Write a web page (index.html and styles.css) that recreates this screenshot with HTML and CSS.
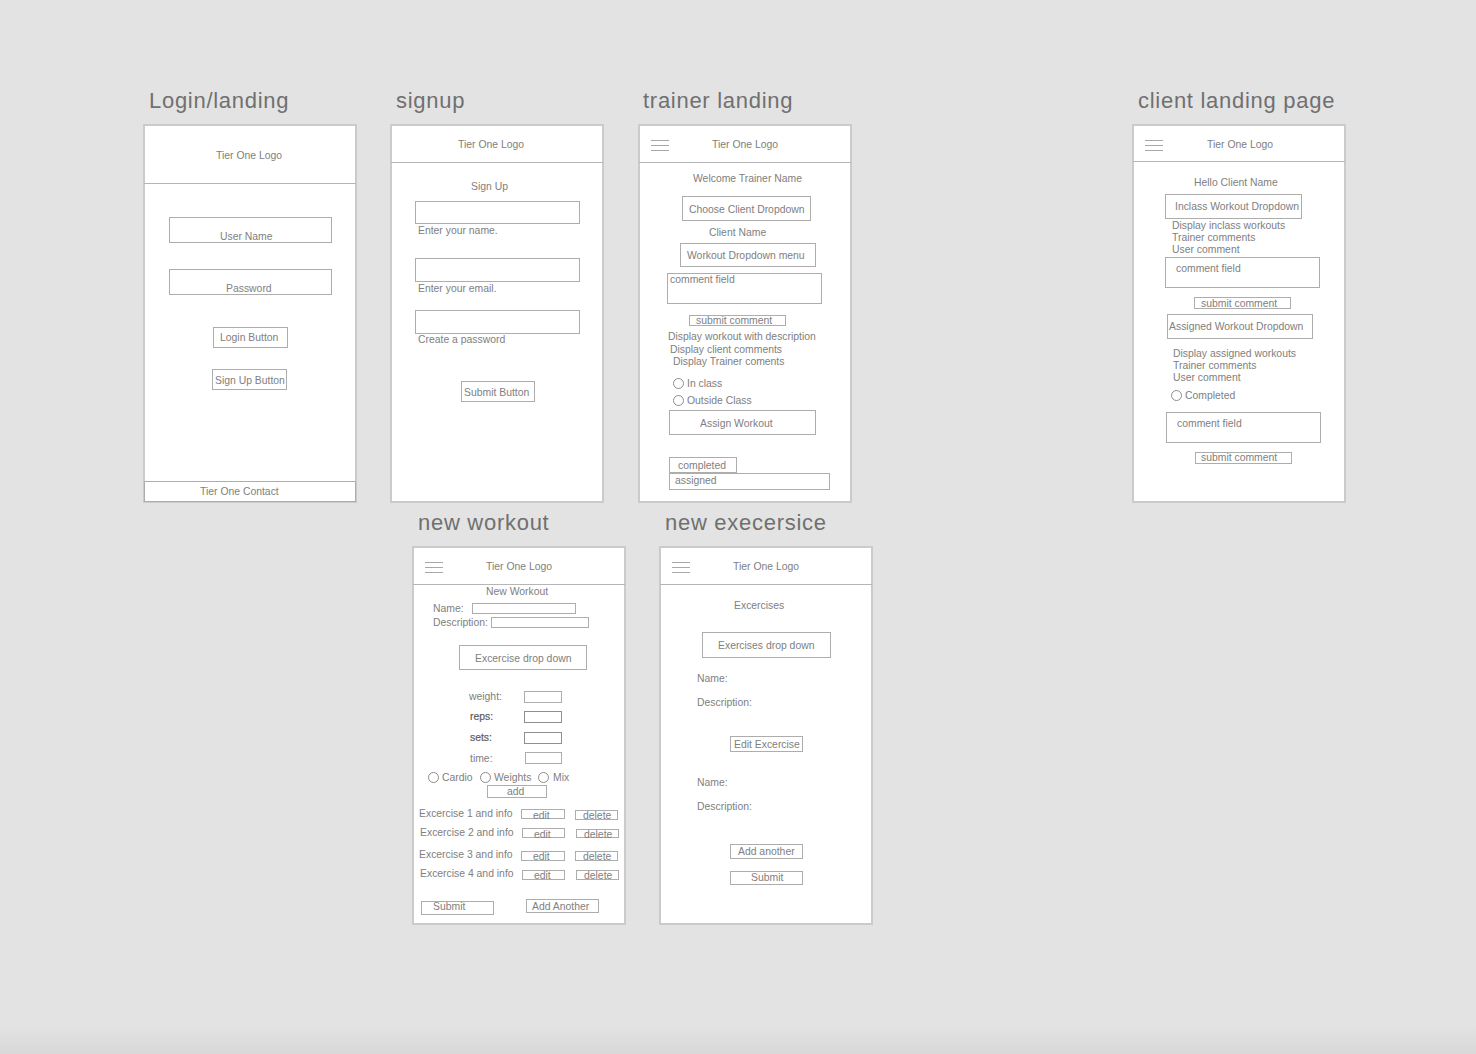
FILE: index.html
```html
<!DOCTYPE html>
<html lang="en">
<head>
  <meta charset="UTF-8">
  <title>Tier One wireframes</title>
  <link rel="stylesheet" href="styles.css">
</head>
<body>
  <div class="canvas">
    <h2 class="title title-login">Login/landing</h2>
    <h2 class="title title-signup">signup</h2>
    <h2 class="title title-trainer">trainer landing</h2>
    <h2 class="title title-client">client landing page</h2>
    <h2 class="title title-workout">new workout</h2>
    <h2 class="title title-exercise">new execersice</h2>

    <!-- login -->
    <section class="frame frame-login">
      <div class="head head-tall"><span>Tier One Logo</span></div>
      <div class="box l-user-box"></div><span class="txt l-user">User Name</span>
      <div class="box l-pass-box"></div><span class="txt l-pass">Password</span>
      <div class="box l-login-box"></div><span class="txt l-login">Login Button</span>
      <div class="box l-signup-box"></div><span class="txt l-signup">Sign Up Button</span>
      <div class="box l-foot-box"></div><span class="txt l-foot">Tier One Contact</span>
    </section>

    <!-- signup -->
    <section class="frame frame-signup">
      <div class="head head-plain"><span>Tier One Logo</span></div>
      <span class="txt s-title">Sign Up</span>
      <div class="box s-name-box"></div><span class="txt s-name">Enter your name.</span>
      <div class="box s-email-box"></div><span class="txt s-email">Enter your email.</span>
      <div class="box s-pass-box"></div><span class="txt s-pass">Create a password</span>
      <div class="box s-submit-box"></div><span class="txt s-submit">Submit Button</span>
    </section>

    <!-- trainer landing -->
    <section class="frame frame-trainer">
      <div class="head"><svg class="menu" viewBox="0 0 18 12"><path d="M0 .5h18M0 5.5h18M0 10.5h18"/></svg><span>Tier One Logo</span></div>
      <span class="txt t-welcome">Welcome Trainer Name</span>
      <div class="box t-client-box"></div><span class="txt t-client">Choose Client Dropdown</span>
      <span class="txt t-name">Client Name</span>
      <div class="box t-workout-box"></div><span class="txt t-workout">Workout Dropdown menu</span>
      <div class="box t-comment-box"></div><span class="txt t-comment">comment field</span>
      <div class="box t-submit-box"></div><span class="txt t-submit">submit comment</span>
      <span class="txt t-d1">Display workout with description</span>
      <span class="txt t-d2">Display client comments</span>
      <span class="txt t-d3">Display Trainer coments</span>
      <div class="radio t-radio1"></div><span class="txt t-inclass">In class</span>
      <div class="radio t-radio2"></div><span class="txt t-outside">Outside Class</span>
      <div class="box t-assign-box"></div><span class="txt t-assign">Assign Workout</span>
      <div class="box t-done-box"></div><span class="txt t-done">completed</span>
      <div class="box t-assigned-box"></div><span class="txt t-assigned">assigned</span>
    </section>

    <!-- client landing -->
    <section class="frame frame-client">
      <div class="head head-client"><svg class="menu" viewBox="0 0 18 12"><path d="M0 .5h18M0 5.5h18M0 10.5h18"/></svg><span>Tier One Logo</span></div>
      <span class="txt c-hello">Hello Client Name</span>
      <div class="box c-in-box"></div><span class="txt c-in">Inclass Workout Dropdown</span>
      <span class="txt c-d1">Display inclass workouts</span>
      <span class="txt c-d2">Trainer comments</span>
      <span class="txt c-d3">User comment</span>
      <div class="box c-comment-box"></div><span class="txt c-comment">comment field</span>
      <div class="box c-submit-box"></div><span class="txt c-submit">submit comment</span>
      <div class="box c-as-box"></div><span class="txt c-as">Assigned Workout Dropdown</span>
      <span class="txt c-d4">Display assigned workouts</span>
      <span class="txt c-d5">Trainer comments</span>
      <span class="txt c-d6">User comment</span>
      <div class="radio c-radio"></div><span class="txt c-done">Completed</span>
      <div class="box c-comment2-box"></div><span class="txt c-comment2">comment field</span>
      <div class="box c-submit2-box"></div><span class="txt c-submit2">submit comment</span>
    </section>

    <!-- new workout -->
    <section class="frame frame-workout">
      <div class="head"><svg class="menu" viewBox="0 0 18 12"><path d="M0 .5h18M0 5.5h18M0 10.5h18"/></svg><span>Tier One Logo</span></div>
      <span class="txt w-title">New Workout</span>
      <span class="txt w-name">Name:</span><div class="box w-name-box"></div>
      <span class="txt w-desc">Description:</span><div class="box w-desc-box"></div>
      <div class="box w-ex-box"></div><span class="txt w-ex">Excercise drop down</span>
      <span class="txt w-weight">weight:</span><div class="box w-weight-box"></div>
      <span class="txt bold w-reps">reps:</span><div class="box dark w-reps-box"></div>
      <span class="txt bold w-sets">sets:</span><div class="box dark w-sets-box"></div>
      <span class="txt w-time">time:</span><div class="box w-time-box"></div>
      <div class="radio w-radio1"></div><span class="txt w-cardio">Cardio</span>
      <div class="radio w-radio2"></div><span class="txt w-weights">Weights</span>
      <div class="radio w-radio3"></div><span class="txt w-mix">Mix</span>
      <div class="box w-add-box"></div><span class="txt w-add">add</span>

      <span class="txt w-r1">Excercise 1 and info</span>
      <div class="box w-r1-edit-box"></div><span class="txt w-r1-edit">edit</span>
      <div class="box w-r1-del-box"></div><span class="txt w-r1-del">delete</span>

      <span class="txt w-r2">Excercise 2 and info</span>
      <div class="box w-r2-edit-box"></div><span class="txt w-r2-edit">edit</span>
      <div class="box w-r2-del-box"></div><span class="txt w-r2-del">delete</span>

      <span class="txt w-r3">Excercise 3 and info</span>
      <div class="box w-r3-edit-box"></div><span class="txt w-r3-edit">edit</span>
      <div class="box w-r3-del-box"></div><span class="txt w-r3-del">delete</span>

      <span class="txt w-r4">Excercise 4 and info</span>
      <div class="box w-r4-edit-box"></div><span class="txt w-r4-edit">edit</span>
      <div class="box w-r4-del-box"></div><span class="txt w-r4-del">delete</span>

      <div class="box w-submit-box"></div><span class="txt w-submit">Submit</span>
      <div class="box w-another-box"></div><span class="txt w-another">Add Another</span>
    </section>

    <!-- new exercise -->
    <section class="frame frame-exercise">
      <div class="head"><svg class="menu" viewBox="0 0 18 12"><path d="M0 .5h18M0 5.5h18M0 10.5h18"/></svg><span>Tier One Logo</span></div>
      <span class="txt e-title">Excercises</span>
      <div class="box e-drop-box"></div><span class="txt e-drop">Exercises drop down</span>
      <span class="txt e-name">Name:</span>
      <span class="txt e-desc">Description:</span>
      <div class="box e-edit-box"></div><span class="txt e-edit">Edit Excercise</span>
      <span class="txt e-name2">Name:</span>
      <span class="txt e-desc2">Description:</span>
      <div class="box e-add-box"></div><span class="txt e-add">Add another</span>
      <div class="box e-submit-box"></div><span class="txt e-submit">Submit</span>
    </section>
  </div>
</body>
</html>
```

FILE: styles.css
```css
* {
  box-sizing: border-box;
}

html, body {
  margin: 0;
  padding: 0;
}

body {
  font-family: "Liberation Sans", Arial, sans-serif;
  background: linear-gradient(#e3e3e3 0, #e3e3e3 1025px, #d8d8d8 1054px);
  height: 1054px;
  overflow: hidden;
}

.canvas {
  position: relative;
  width: 1476px;
  height: 1054px;
}

/* artboard names */
.title {
  position: absolute;
  top: 87px;
  margin: 0;
  font-size: 22px;
  font-weight: normal;
  line-height: 28px;
  letter-spacing: 0.72px;
  color: #707070;
  white-space: nowrap;
}

.title-login { left: 149px; }
.title-signup { left: 396px; }
.title-trainer { left: 643px; }
.title-client { left: 1138px; }
.title-workout { left: 418px; top: 509px; }
.title-exercise { left: 665px; top: 509px; }

/* artboards */
.frame {
  position: absolute;
  width: 214px;
  height: 379px;
  background-color: #fff;
  box-shadow: inset 0 0 0 2px #cbcbcb;
  top: 124px;
}

.frame-login { left: 143px; }
.frame-signup { left: 390px; }
.frame-trainer { left: 638px; }
.frame-client { left: 1132px; }
.frame-workout { left: 412px; top: 546px; }
.frame-exercise { left: 659px; top: 546px; }

.head {
  display: flex;
  align-items: center;
  height: 39px;
  margin: 0 1px;
  padding-left: 12px;
  padding-top: 4px;
  border-bottom: 1px solid #b5b5b5;
  font-size: 10.4px;
  line-height: 14px;
  color: #808080;
}

.head-tall {
  height: 60px;
  padding-left: 72px;
}

.head-plain {
  padding-left: 67px;
}

.head-client {
  height: 38px;
}

.head-client span {
  margin-left: 1px;
}

.menu {
  width: 18px;
  height: 12px;
  margin-top: 2px;
  margin-right: 43px;
  fill: none;
  stroke: #a8a8a8;
  stroke-width: 1;
}

.box {
  position: absolute;
  border: 1px solid #adadad;
}

.dark {
  border-color: #8f8f8f;
}

.radio {
  position: absolute;
  width: 11px;
  height: 11px;
  border: 1px solid #8c8c8c;
  border-radius: 50%;
}

.txt {
  position: absolute;
  font-size: 10.4px;
  line-height: 16px;
  color: #808080;
  white-space: nowrap;
}

.bold {
  color: #5c5c5c;
  -webkit-text-stroke: 0.2px #5c5c5c;
}

/* login */
.l-user-box { left: 26px; top: 93px; width: 163px; height: 26px; }
.l-user { left: 77px; top: 105px; }
.l-pass-box { left: 26px; top: 145px; width: 163px; height: 26px; }
.l-pass { left: 83px; top: 157px; }
.l-login-box { left: 70px; top: 203px; width: 75px; height: 21px; }
.l-login { left: 77px; top: 206px; }
.l-signup-box { left: 69px; top: 245px; width: 75px; height: 21px; }
.l-signup { left: 72px; top: 249px; }
.l-foot-box { left: 1px; top: 357px; width: 212px; height: 21px; }
.l-foot { left: 57px; top: 360px; }

/* signup */
.s-title { left: 81px; top: 55px; }
.s-name-box { left: 25px; top: 77px; width: 165px; height: 23px; }
.s-name { left: 28px; top: 99px; }
.s-email-box { left: 25px; top: 134px; width: 165px; height: 24px; }
.s-email { left: 28px; top: 157px; }
.s-pass-box { left: 25px; top: 186px; width: 165px; height: 24px; }
.s-pass { left: 28px; top: 208px; }
.s-submit-box { left: 71px; top: 257px; width: 74px; height: 21px; }
.s-submit { left: 74px; top: 261px; }

/* trainer */
.t-welcome { left: 55px; top: 47px; }
.t-client-box { left: 44px; top: 72px; width: 129px; height: 25px; }
.t-client { left: 51px; top: 78px; }
.t-name { left: 71px; top: 101px; }
.t-workout-box { left: 42px; top: 119px; width: 136px; height: 24px; }
.t-workout { left: 49px; top: 124px; }
.t-comment-box { left: 29px; top: 149px; width: 155px; height: 31px; }
.t-comment { left: 32px; top: 148px; }
.t-submit-box { left: 51px; top: 191px; width: 97px; height: 11px; }
.t-submit { left: 58px; top: 189px; }
.t-d1 { left: 30px; top: 205px; }
.t-d2 { left: 32px; top: 218px; }
.t-d3 { left: 35px; top: 230px; }
.t-radio1 { left: 35px; top: 254px; }
.t-inclass { left: 49px; top: 252px; }
.t-radio2 { left: 35px; top: 271px; }
.t-outside { left: 49px; top: 269px; }
.t-assign-box { left: 31px; top: 286px; width: 147px; height: 25px; }
.t-assign { left: 62px; top: 292px; }
.t-done-box { left: 31px; top: 333px; width: 68px; height: 16px; }
.t-done { left: 40px; top: 334px; }
.t-assigned-box { left: 31px; top: 349px; width: 161px; height: 17px; }
.t-assigned { left: 37px; top: 349px; }

/* client */
.c-hello { left: 62px; top: 51px; }
.c-in-box { left: 33px; top: 70px; width: 137px; height: 25px; }
.c-in { left: 43px; top: 75px; }
.c-d1 { left: 40px; top: 94px; }
.c-d2 { left: 40px; top: 106px; }
.c-d3 { left: 40px; top: 118px; }
.c-comment-box { left: 33px; top: 133px; width: 155px; height: 31px; }
.c-comment { left: 44px; top: 137px; }
.c-submit-box { left: 62px; top: 173px; width: 97px; height: 12px; }
.c-submit { left: 69px; top: 172px; }
.c-as-box { left: 35px; top: 190px; width: 146px; height: 25px; }
.c-as { left: 37px; top: 195px; }
.c-d4 { left: 41px; top: 222px; }
.c-d5 { left: 41px; top: 234px; }
.c-d6 { left: 41px; top: 246px; }
.c-radio { left: 39px; top: 266px; }
.c-done { left: 53px; top: 264px; }
.c-comment2-box { left: 34px; top: 288px; width: 155px; height: 31px; }
.c-comment2 { left: 45px; top: 292px; }
.c-submit2-box { left: 63px; top: 328px; width: 97px; height: 12px; }
.c-submit2 { left: 69px; top: 326px; }

/* new workout */
.w-title { left: 74px; top: 38px; }
.w-name { left: 21px; top: 55px; }
.w-name-box { left: 60px; top: 57px; width: 104px; height: 11px; }
.w-desc { left: 21px; top: 69px; }
.w-desc-box { left: 79px; top: 71px; width: 98px; height: 11px; }
.w-ex-box { left: 47px; top: 99px; width: 128px; height: 25px; }
.w-ex { left: 63px; top: 105px; }
.w-weight { left: 57px; top: 143px; }
.w-weight-box { left: 112px; top: 145px; width: 38px; height: 12px; }
.w-reps { left: 58px; top: 163px; }
.w-reps-box { left: 112px; top: 165px; width: 38px; height: 12px; }
.w-sets { left: 58px; top: 184px; }
.w-sets-box { left: 112px; top: 186px; width: 38px; height: 12px; }
.w-time { left: 58px; top: 205px; }
.w-time-box { left: 113px; top: 206px; width: 37px; height: 12px; }
.w-radio1 { left: 16px; top: 226px; }
.w-cardio { left: 30px; top: 224px; }
.w-radio2 { left: 68px; top: 226px; }
.w-weights { left: 82px; top: 224px; }
.w-radio3 { left: 126px; top: 226px; }
.w-mix { left: 141px; top: 224px; }
.w-add-box { left: 75px; top: 239px; width: 60px; height: 13px; }
.w-add { left: 95px; top: 238px; }

.w-r1 { left: 7px; top: 260px; }
.w-r1-edit-box { left: 109px; top: 263px; width: 44px; height: 10px; }
.w-r1-edit { left: 121px; top: 262px; }
.w-r1-del-box { left: 163px; top: 264px; width: 43px; height: 10px; }
.w-r1-del { left: 171px; top: 262px; }

.w-r2 { left: 8px; top: 279px; }
.w-r2-edit-box { left: 110px; top: 282px; width: 43px; height: 10px; }
.w-r2-edit { left: 122px; top: 281px; }
.w-r2-del-box { left: 164px; top: 283px; width: 43px; height: 9px; }
.w-r2-del { left: 172px; top: 281px; }

.w-r3 { left: 7px; top: 301px; }
.w-r3-edit-box { left: 109px; top: 305px; width: 44px; height: 10px; }
.w-r3-edit { left: 121px; top: 303px; }
.w-r3-del-box { left: 163px; top: 305px; width: 43px; height: 10px; }
.w-r3-del { left: 171px; top: 303px; }

.w-r4 { left: 8px; top: 320px; }
.w-r4-edit-box { left: 110px; top: 324px; width: 43px; height: 10px; }
.w-r4-edit { left: 122px; top: 322px; }
.w-r4-del-box { left: 164px; top: 324px; width: 43px; height: 10px; }
.w-r4-del { left: 172px; top: 322px; }

.w-submit-box { left: 9px; top: 355px; width: 73px; height: 14px; }
.w-submit { left: 21px; top: 353px; }
.w-another-box { left: 114px; top: 353px; width: 73px; height: 14px; }
.w-another { left: 120px; top: 353px; }

/* new exercise */
.e-title { left: 75px; top: 52px; }
.e-drop-box { left: 43px; top: 86px; width: 129px; height: 26px; }
.e-drop { left: 59px; top: 92px; }
.e-name { left: 38px; top: 125px; }
.e-desc { left: 38px; top: 149px; }
.e-edit-box { left: 71px; top: 190px; width: 73px; height: 16px; }
.e-edit { left: 75px; top: 191px; }
.e-name2 { left: 38px; top: 229px; }
.e-desc2 { left: 38px; top: 253px; }
.e-add-box { left: 71px; top: 298px; width: 73px; height: 15px; }
.e-add { left: 79px; top: 298px; }
.e-submit-box { left: 71px; top: 325px; width: 73px; height: 14px; }
.e-submit { left: 92px; top: 324px; }
```
